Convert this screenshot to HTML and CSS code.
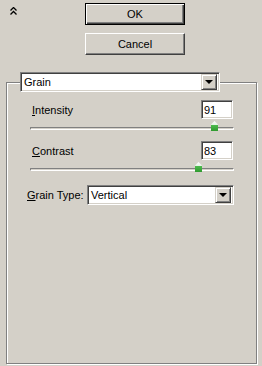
FILE: index.html
```html
<!DOCTYPE html>
<html lang="en">
<head>
    <meta charset="UTF-8" />
    <title>Grain</title>
    <link rel="stylesheet" href="styles.css">
</head>
<body>
    <div class="top">
        <span class="collapse">
            <svg width="8" height="8" viewBox="0 0 8 8">
                <path d="M0.5 3.5 L3.5 0.5 L6.5 3.5 M0.5 7.5 L3.5 4.5 L6.5 7.5" fill="none" stroke="#000" stroke-width="1.3"/>
            </svg>
        </span>
        <div class="actions">
            <button class="btn default">OK</button>
            <button class="btn">Cancel</button>
        </div>
    </div>
    <fieldset class="group">
        <legend>
            <div class="combo filter-combo">
                <span class="combo-value">Grain</span>
                <span class="combo-arrow"></span>
            </div>
        </legend>
        <div class="group-body">
            <div class="field-row">
                <label><u>I</u>ntensity</label>
                <input class="num" type="text" value="91">
            </div>
            <div class="slider">
                <div class="track"></div>
                <span class="thumb" style="left:181px"></span>
            </div>
            <div class="field-row second">
                <label><u>C</u>ontrast</label>
                <input class="num" type="text" value="83">
            </div>
            <div class="slider">
                <div class="track"></div>
                <span class="thumb" style="left:165px"></span>
            </div>
            <div class="type-row">
                <label><u>G</u>rain Type:</label>
                <div class="combo type-combo">
                    <span class="combo-value">Vertical</span>
                    <span class="combo-arrow"></span>
                </div>
            </div>
        </div>
    </fieldset>
</body>
</html>
```

FILE: styles.css
```css
body {
    margin: 0;
    height: 366px;
    box-sizing: border-box;
    padding-bottom: 2px;
    background: #d4d0c8;
    font-family: 'Liberation Sans', Arial, sans-serif;
    font-size: 11px;
    color: #000;
    display: flex;
    flex-direction: column;
}
.top {
    display: flex;
    padding-top: 3px;
}
.collapse {
    display: flex;
    width: 8px;
    height: 8px;
    margin: 4px 0 0 10px;
}
.actions {
    display: flex;
    flex-direction: column;
    gap: 8px;
    margin-left: 67px;
}
.btn {
    width: 100px;
    height: 22px;
    padding: 0;
    font-family: inherit;
    font-size: 11px;
    color: #000;
    background: #d4d0c8;
    border: 1px solid;
    border-color: #fff #404040 #404040 #fff;
    box-shadow: inset -1px -1px 0 #808080, inset 1px 1px 0 #d4d0c8;
}
.btn.default {
    border-color: #000;
    box-shadow: inset 1px 1px 0 #fff, inset -1px -1px 0 #404040, inset -2px -2px 0 #808080;
}
.group {
    flex: 1;
    min-width: 0;
    margin: 17px 5px 0 6px;
    padding: 0;
    border: 1px solid #808080;
    box-shadow: 1px 1px 0 #fff, inset 1px 1px 0 #fff;
}
.group legend {
    padding: 0;
    margin-left: 13px;
}
.combo {
    display: flex;
    align-items: center;
    height: 20px;
    box-sizing: border-box;
    background: #fff;
    border: 1px solid;
    border-color: #808080 #fff #fff #808080;
    box-shadow: inset 1px 1px 0 #404040, inset -1px -1px 0 #d4d0c8;
    padding: 2px 2px 2px 3px;
}
.filter-combo {
    width: 200px;
}
.combo-value {
    flex: 1;
    line-height: 16px;
}
.combo-arrow {
    position: relative;
    width: 16px;
    height: 16px;
    box-sizing: border-box;
    background: #d4d0c8;
    border: 1px solid;
    border-color: #d4d0c8 #404040 #404040 #d4d0c8;
    box-shadow: inset 1px 1px 0 #fff, inset -1px -1px 0 #808080;
}
.combo-arrow::after {
    content: "";
    position: absolute;
    left: 3px;
    top: 5px;
    border-left: 4px solid transparent;
    border-right: 4px solid transparent;
    border-top: 4px solid #000;
}
.group-body {
    padding: 8px 22px 0 20px;
}
.field-row {
    display: flex;
    align-items: center;
    justify-content: space-between;
    height: 19px;
    padding-left: 5px;
    margin-right: 1px;
}
.field-row.second {
    margin-top: 9px;
}
.num {
    width: 32px;
    height: 19px;
    box-sizing: border-box;
    margin: 0;
    padding: 0 0 0 2px;
    font-family: inherit;
    font-size: 11px;
    color: #000;
    background: #fff;
    border: 1px solid;
    border-color: #808080 #fff #fff #808080;
    box-shadow: inset 1px 1px 0 #404040, inset -1px -1px 0 #d4d0c8;
    outline: none;
}
.slider {
    position: relative;
    height: 11px;
    box-sizing: border-box;
    margin: 2px 0 0 3px;
    padding-top: 6px;
}
.track {
    height: 1px;
    border: 1px solid;
    border-color: #808080 #fff #fff #808080;
    border-radius: 1px;
}
.thumb {
    position: absolute;
    top: 0;
    width: 7px;
    height: 10px;
    background: linear-gradient(#fff 0, #e8f4e8 35%, #4cb84c 45%, #2f9a2f 100%);
    clip-path: polygon(50% 0, 100% 35%, 100% 100%, 0 100%, 0 35%);
}
.type-row {
    display: flex;
    align-items: center;
    margin-top: 12px;
}
.type-combo {
    width: 147px;
    margin-left: auto;
}
```
